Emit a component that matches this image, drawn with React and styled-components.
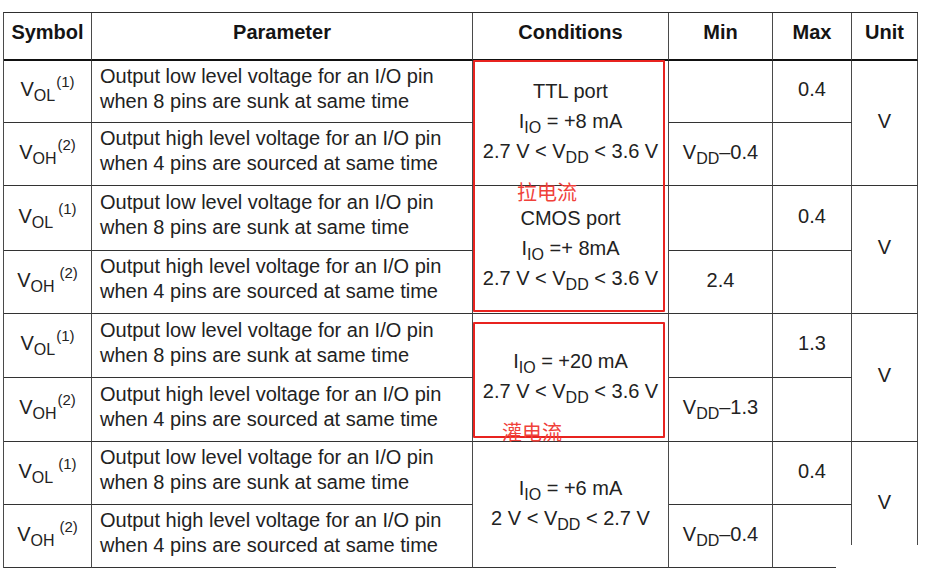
import React from 'react';
import styled, { createGlobalStyle } from 'styled-components';

const GlobalStyle = createGlobalStyle`
    html, body {
        margin: 0;
        padding: 0;
        background: #ffffff;
    }
    body {
        font-family: "Liberation Sans", Arial, sans-serif;
        color: #222;
    }
`;

const Page = styled.div`
    width: 928px;
    height: 582px;
    padding: 12px 0 0 3px;
    box-sizing: border-box;
    overflow: hidden;
`;

const Table = styled.div`
    position: relative;
    display: grid;
    grid-template-columns: 88px 381px 196px 104px 79px 66px;
    grid-template-rows: 48px 62px 63px 65px 63px 64px 64px 63px 63px;
    width: max-content;
    border-top: 1px solid #2e2e2e;
    border-left: 1px solid #4a4a4a;
`;

const Cell = styled.div`
    box-sizing: border-box;
    border-right: 1px solid #4a4a4a;
    border-bottom: 1px solid #333;
    grid-row: ${(p) => (p.$span ? `span ${p.$span}` : 'auto')};
    display: flex;
    flex-direction: column;
    justify-content: center;
    align-items: ${(p) => (p.$left ? 'flex-start' : 'center')};
    padding: ${(p) => (p.$left ? '0 0 6px 8px' : '0 0 4px')};
    font-size: 20px;
    line-height: 25px;
    white-space: nowrap;
`;

const HeadCell = styled(Cell)`
    border-bottom: 2px solid #111;
    font-weight: 700;
    color: #141414;
    padding: 0 0 7px;
`;

const CondLines = styled.div`
    display: flex;
    flex-direction: column;
    align-items: center;
    line-height: 30px;
`;

const Sub = styled.span`
    font-size: 16px;
    line-height: 0;
    vertical-align: -5px;
`;

const Sup = styled.span`
    font-size: 15px;
    line-height: 0;
    vertical-align: 9px;
    margin-left: ${(p) => (p.$gap ? '5px' : '1px')};
`;

const Note = styled.div`
    position: absolute;
    left: 469px;
    top: ${(p) => p.$top}px;
    width: 192px;
    height: ${(p) => p.$height}px;
    box-sizing: border-box;
    border: 2px solid #e8231f;
    border-radius: 1px;
    pointer-events: none;
`;

const NoteLabel = styled.span`
    position: absolute;
    left: ${(p) => p.$x}px;
    top: ${(p) => p.$y}px;
    font-family: "Noto Sans CJK SC", sans-serif;
    font-size: 20px;
    line-height: 22px;
    color: #f0413a;
`;

const Watermark = styled.div`
    position: absolute;
    left: 832px;
    top: 532px;
    width: 96px;
    height: 50px;
    background: #ffffff;
`;

const Sym = ({ sub, note, gap }) => (
    <Cell>
        <span>
            V<Sub>{sub}</Sub>
            <Sup $gap={gap}>({note})</Sup>
        </span>
    </Cell>
);

const Vdd = () => (
    <>
        V<Sub>DD</Sub>
    </>
);

const Iio = () => (
    <>
        I<Sub>IO</Sub>
    </>
);

const LOW = ['Output low level voltage for an I/O pin', 'when 8 pins are sunk at same time'];
const HIGH = ['Output high level voltage for an I/O pin', 'when 4 pins are sourced at same time'];

const Param = ({ lines }) => (
    <Cell $left>
        <span>{lines[0]}</span>
        <span>{lines[1]}</span>
    </Cell>
);

const Block = ({ gap, cond, min, max }) => (
    <>
        <Sym sub="OL" note="1" gap={gap} />
        <Param lines={LOW} />
        <Cell $span={2}>
            <CondLines>{cond}</CondLines>
        </Cell>
        <Cell>{min[0]}</Cell>
        <Cell>{max}</Cell>
        <Cell $span={2}>V</Cell>
        <Sym sub="OH" note="2" gap={gap} />
        <Param lines={HIGH} />
        <Cell>{min[1]}</Cell>
        <Cell />
    </>
);

function App() {
    return (
        <Page>
            <GlobalStyle />
            <Table>
                <HeadCell>Symbol</HeadCell>
                <HeadCell>Parameter</HeadCell>
                <HeadCell>Conditions</HeadCell>
                <HeadCell>Min</HeadCell>
                <HeadCell>Max</HeadCell>
                <HeadCell>Unit</HeadCell>

                <Block
                    cond={
                        <>
                            <span>TTL port</span>
                            <span>
                                <Iio /> = +8 mA
                            </span>
                            <span>
                                2.7 V &lt; <Vdd /> &lt; 3.6 V
                            </span>
                        </>
                    }
                    min={[
                        null,
                        <span>
                            <Vdd />&ndash;0.4
                        </span>,
                    ]}
                    max="0.4"
                />
                <Block
                    gap
                    cond={
                        <>
                            <span>CMOS port</span>
                            <span>
                                <Iio /> =+ 8mA
                            </span>
                            <span>
                                2.7 V &lt; <Vdd /> &lt; 3.6 V
                            </span>
                        </>
                    }
                    min={[null, '2.4']}
                    max="0.4"
                />
                <Block
                    cond={
                        <>
                            <span>
                                <Iio /> = +20 mA
                            </span>
                            <span>
                                2.7 V &lt; <Vdd /> &lt; 3.6 V
                            </span>
                        </>
                    }
                    min={[
                        null,
                        <span>
                            <Vdd />&ndash;1.3
                        </span>,
                    ]}
                    max="1.3"
                />
                <Block
                    gap
                    cond={
                        <>
                            <span>
                                <Iio /> = +6 mA
                            </span>
                            <span>
                                2 V &lt; <Vdd /> &lt; 2.7 V
                            </span>
                        </>
                    }
                    min={[
                        null,
                        <span>
                            <Vdd />&ndash;0.4
                        </span>,
                    ]}
                    max="0.4"
                />

                <Note $top={47} $height={252}>
                    <NoteLabel $x={42} $y={119}>拉电流</NoteLabel>
                </Note>
                <Note $top={309} $height={116}>
                    <NoteLabel $x={27} $y={97}>灌电流</NoteLabel>
                </Note>
                <Watermark />
            </Table>
        </Page>
    );
}

export default App;
